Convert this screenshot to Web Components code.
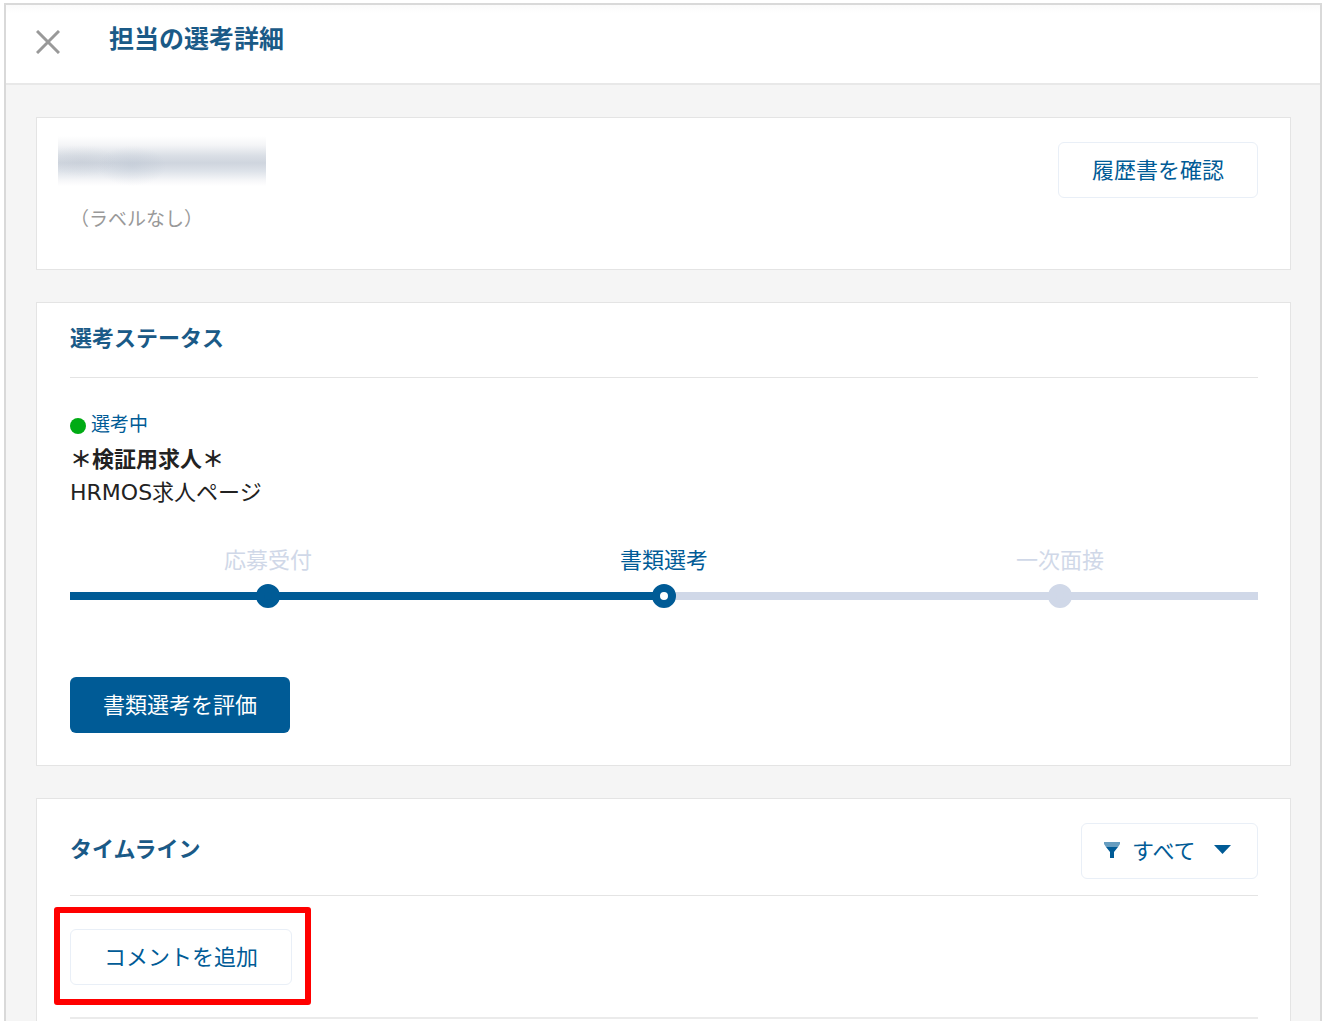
<!DOCTYPE html>
<html lang="ja">
<head>
<meta charset="utf-8">
<title>担当の選考詳細</title>
<style>
  body {
    margin: 0;
    background: #fff;
    color: #222;
    font: 22px/32px "Noto Sans CJK JP", sans-serif;
    --brand: #005b96;
    --heading: #1a5a87;
    --muted: #d0d8e8;
    --rule: #e4e4e4;
  }
</style>
</head>
<body>
<selection-page heading="担当の選考詳細">
  <app-card>
    <applicant-summary label="（ラベルなし）">
      <ui-button slot="action">履歴書を確認</ui-button>
    </applicant-summary>
  </app-card>
  <app-card heading="選考ステータス">
    <selection-status state="選考中" job="＊検証用求人＊" source="HRMOS求人ページ"></selection-status>
    <step-track>
      <step-item state="done">応募受付</step-item>
      <step-item state="current">書類選考</step-item>
      <step-item state="todo">一次面接</step-item>
    </step-track>
    <ui-button variant="primary">書類選考を評価</ui-button>
  </app-card>
  <app-card heading="タイムライン" open-end>
    <filter-select slot="tools"></filter-select>
    <comment-bar>
      <ui-button>コメントを追加</ui-button>
    </comment-bar>
  </app-card>
</selection-page>

<script>
const define = (name, render) => customElements.define(name, class extends HTMLElement {
  connectedCallback() {
    if (this.shadowRoot) return;
    this.attachShadow({ mode: "open" }).innerHTML = render(this);
  }
});
const attr = (el, name) => el.getAttribute(name) || "";

define("selection-page", el => `
  <style>
    * { box-sizing: border-box; }
    :host { display: block; margin: 3px 4px 0; border: 2px solid #d9d9d9; border-bottom: 0; background: #f5f5f5; }
    header { display: flex; align-items: flex-start; gap: 43px; padding: 14px 24px 18px; background: linear-gradient(#fafafa, #fff 8px); border-bottom: 2px solid #e8e8e8; }
    button { display: flex; align-items: center; width: 36px; height: 46px; padding: 0 6px; border: 0; background: none; cursor: pointer; }
    h1 { margin: 0; font-size: 25px; line-height: 36px; font-weight: 700; color: var(--heading); }
    main { display: flex; flex-direction: column; gap: 32px; padding: 32px 29px 0 30px; }
  </style>
  <header>
    <button type="button" aria-label="閉じる">
      <svg width="24" height="24" viewBox="0 0 24 24" fill="none" stroke="#999" stroke-width="3"><path d="M1 1 23 23M23 1 1 23"/></svg>
    </button>
    <h1>${attr(el, "heading")}</h1>
  </header>
  <main><slot></slot></main>`);

define("app-card", el => `
  <style>
    * { box-sizing: border-box; }
    :host { display: block; background: #fff; border: 1px solid var(--rule); padding: 0 32px 32px 33px; }
    :host(:not([heading])) { padding: 24px 32px 35px 21px; }
    :host([open-end]) { border-bottom: 0; padding-bottom: 3px; }
    header { display: flex; align-items: flex-start; justify-content: space-between; padding: 17px 0 25px; border-bottom: 1px solid var(--rule); }
    :host([open-end]) header { padding: 24px 0 16px; }
    :host([open-end]) h2 { padding-top: 8px; }
    h2 { margin: 0; font-size: 22px; line-height: 32px; font-weight: 700; color: var(--heading); }
  </style>
  ${el.hasAttribute("heading") ? `<header><h2>${attr(el, "heading")}</h2><slot name="tools"></slot></header>` : ""}
  <slot></slot>`);

define("ui-button", () => `
  <style>
    :host { display: inline-block; vertical-align: top; }
    button { box-sizing: border-box; height: 56px; padding: 0 33px 4px; border: 1px solid #e9eff7; border-radius: 6px; background: #fff; color: var(--brand); font: inherit; cursor: pointer; white-space: nowrap; }
    :host([variant="primary"]) button { border: 0; background: var(--brand); color: #fff; }
  </style>
  <button type="button"><slot></slot></button>`);

define("applicant-summary", el => `
  <style>
    :host { display: flex; justify-content: space-between; align-items: flex-start; }
    .name { width: 208px; height: 50px; margin-top: -6px; overflow: hidden; }
    .name::before { content: ""; display: block; height: 100%; background:
      radial-gradient(ellipse 34px 20px at 74px 30px, rgba(165,178,196,.22), transparent),
      radial-gradient(ellipse 34px 16px at 24px 25px, rgba(175,182,194,.15), transparent),
      linear-gradient(#fff 0, #f4f5f7 18%, #d9dee5 40%, #cfd5de 54%, #dde2e9 70%, #f5f6f8 88%, #fff 100%); }
    p { margin: 16px 0 0 12px; font-size: 19px; line-height: 32px; color: #999; }
  </style>
  <div><div class="name" role="img" aria-label="氏名（非表示）"></div><p>${attr(el, "label")}</p></div>
  <slot name="action"></slot>`);

define("selection-status", el => `
  <style>
    :host { display: block; margin-top: 28px; line-height: 34px; }
    p { margin: 0; }
    .state { display: flex; align-items: center; gap: 5px; font-size: 19px; color: var(--brand); }
    .state::before { content: ""; width: 16px; height: 16px; margin-top: 6px; border-radius: 50%; background: #00ab14; }
    .job { font-weight: 700; }
    .source { padding-top: 2px; font-family: "DejaVu Sans", "Noto Sans CJK JP", sans-serif; }
  </style>
  <p class="state">${attr(el, "state")}</p>
  <p class="job">${attr(el, "job")}</p>
  <p class="source">${attr(el, "source")}</p>`);

define("step-track", () => `
  <style>:host { display: flex; margin: 32px 0 69px; } ::slotted(*) { flex: 1; }</style>
  <slot></slot>`);

define("step-item", () => `
  <style>
    :host { display: flex; flex-direction: column; gap: 10px; text-align: center; color: var(--muted); --before: var(--muted); --after: var(--muted); --dot: var(--muted); }
    :host([state="done"]) { --before: var(--brand); --after: var(--brand); --dot: var(--brand); }
    :host([state="current"]) { color: var(--brand); --before: var(--brand); --dot: var(--brand); }
    .track { display: flex; align-items: center; height: 24px; }
    .track::before, .track::after { content: ""; flex: 1; height: 8px; background: var(--before); }
    .track::after { background: var(--after); }
    .dot { box-sizing: border-box; width: 24px; height: 24px; margin: 0 -1px; border: 8px solid var(--dot); border-radius: 50%; background: var(--dot); z-index: 1; }
    :host([state="current"]) .dot { background: #fff; }
  </style>
  <span><slot></slot></span>
  <div class="track"><div class="dot"></div></div>`);

define("filter-select", () => `
  <style>
    :host { display: block; }
    label { display: grid; align-items: center; color: var(--brand); }
    label > * { grid-area: 1 / 1; }
    select { appearance: none; box-sizing: border-box; width: 177px; height: 56px; padding: 0 50px 4px; border: 1px solid #e9eff7; border-radius: 6px; background: #fff; color: inherit; font: inherit; cursor: pointer; }
    svg { pointer-events: none; fill: currentColor; z-index: 1; }
    .funnel { margin-left: 23px; }
    .caret { justify-self: end; margin-right: 27px; }
  </style>
  <label>
    <select aria-label="絞り込み"><option>すべて</option></select>
    <svg class="funnel" width="16" height="20" viewBox="0 0 16 20"><path d="M0 1h16v2l-2 3H2L0 3z" opacity=".6"/><path d="M2 6h12l-4 5v6H6v-6z"/></svg>
    <svg class="caret" width="17" height="14" viewBox="0 0 17 14"><path d="M0 1h17L8.500 10z"/></svg>
  </label>`);

define("comment-bar", () => `
  <style>
    :host { display: block; padding: 33px 0 32px; border-bottom: 2px solid #ebebeb; }
    .mark { position: relative; display: inline-block; vertical-align: top; }
    .mark::after { content: ""; position: absolute; inset: -22px -19px -20px -16px; border: 6px solid #f00; border-radius: 3px; pointer-events: none; }
  </style>
  <div class="mark"><slot></slot></div>`);
</script>
</body>
</html>
